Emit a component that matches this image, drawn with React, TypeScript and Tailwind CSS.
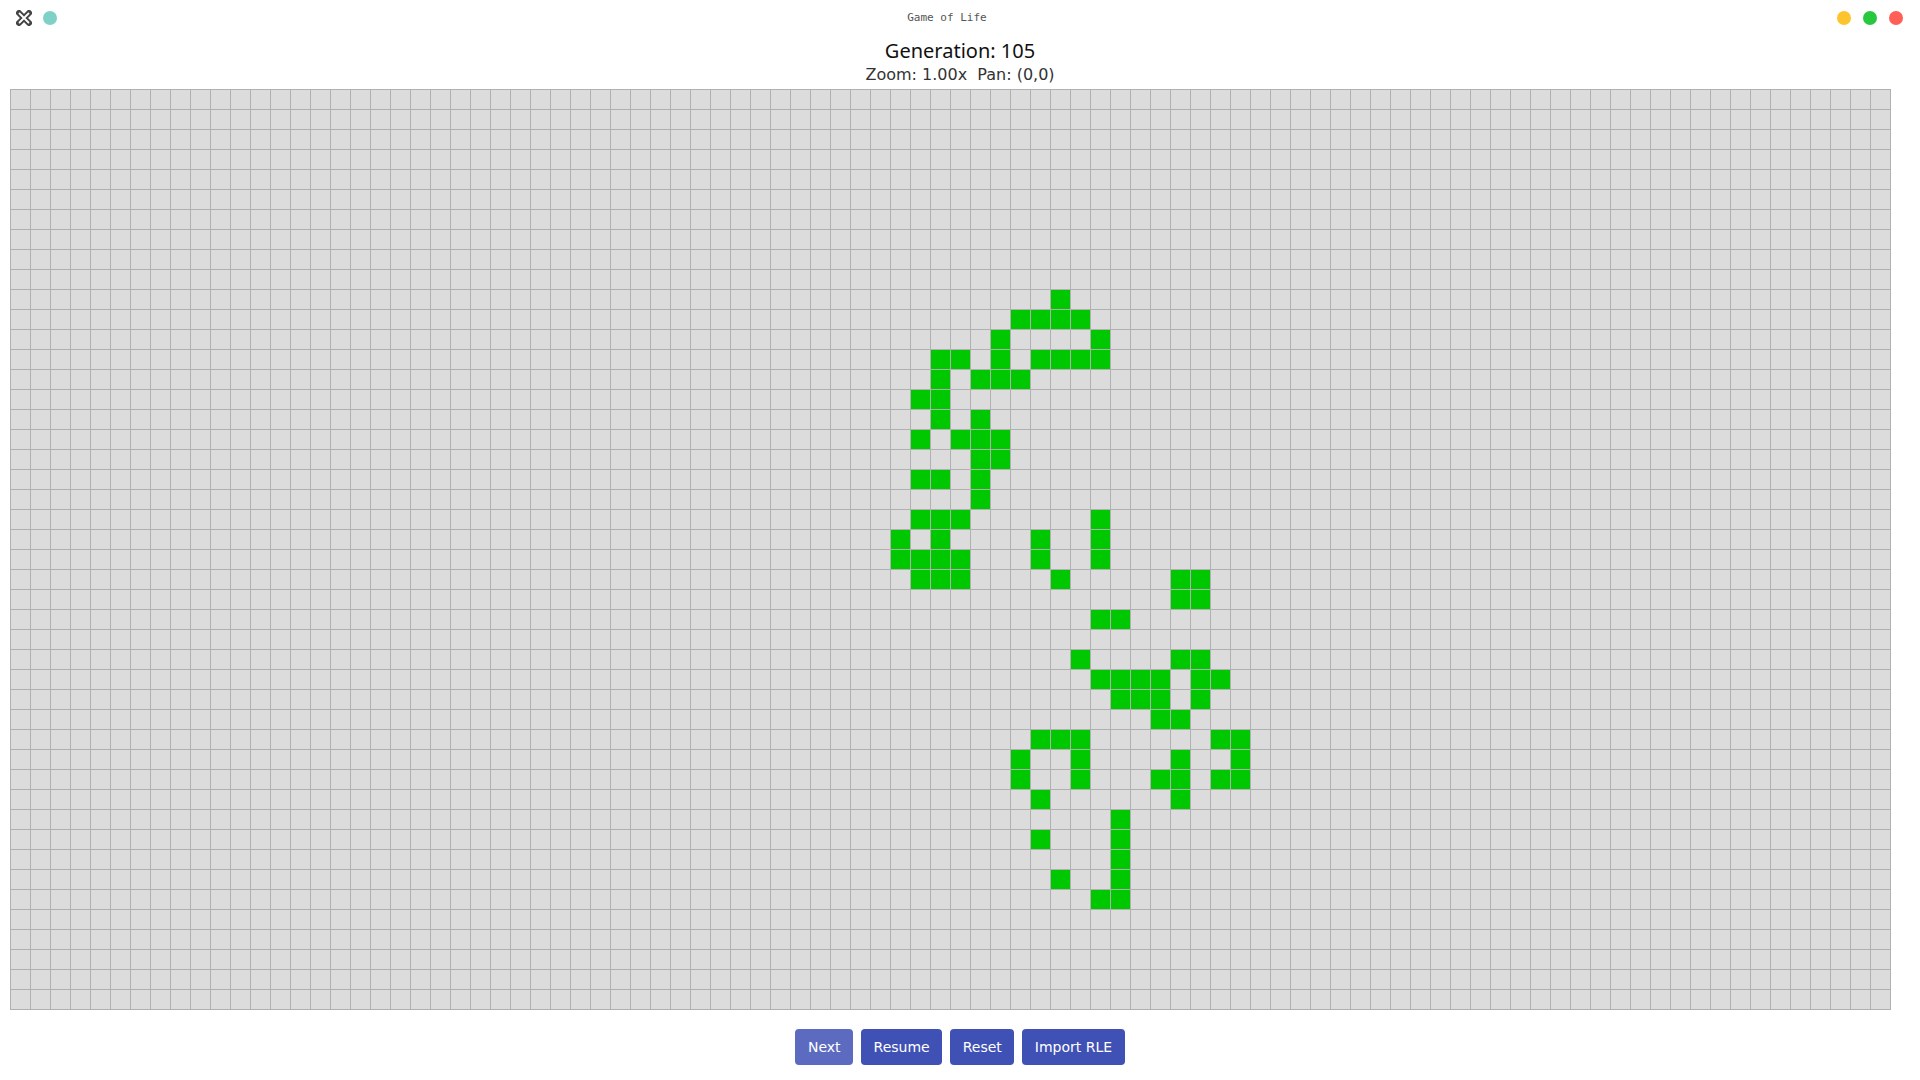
import React from "react";

const COLS = 94;
const ROWS = 46;

// live cells per row (generation 105)
const LIVE: Record<number, number[]> = {
  10: [52],
  11: [50, 51, 52, 53],
  12: [49, 54],
  13: [46, 47, 49, 51, 52, 53, 54],
  14: [46, 48, 49, 50],
  15: [45, 46],
  16: [46, 48],
  17: [45, 47, 48, 49],
  18: [48, 49],
  19: [45, 46, 48],
  20: [48],
  21: [45, 46, 47, 54],
  22: [44, 46, 51, 54],
  23: [44, 45, 46, 47, 51, 54],
  24: [45, 46, 47, 52, 58, 59],
  25: [58, 59],
  26: [54, 55],
  28: [53, 58, 59],
  29: [54, 55, 56, 57, 59, 60],
  30: [55, 56, 57, 59],
  31: [57, 58],
  32: [51, 52, 53, 60, 61],
  33: [50, 53, 58, 61],
  34: [50, 53, 57, 58, 60, 61],
  35: [51, 58],
  36: [55],
  37: [51, 55],
  38: [55],
  39: [52, 55],
  40: [54, 55],
};

function isAlive(r: number, c: number) {
  const row = LIVE[r];
  return row ? row.includes(c) : false;
}

function TitleBar() {
  return (
    <div className="flex h-9 items-center">
      <div className="flex items-center gap-[11px] pl-4">
        <svg width="16" height="16" viewBox="0 0 16 16">
          <path d="M3 3 L13 13 M13 3 L3 13" stroke="#454545" strokeWidth="6" strokeLinecap="round" />
          <path d="M3.5 3.5 L12.5 12.5 M12.5 3.5 L3.5 12.5" stroke="#ffffff" strokeWidth="1.8" strokeLinecap="round" />
        </svg>
        <div className="h-[14px] w-[14px] rounded-full bg-[#7fd1c8]" />
      </div>
      <div className="flex-1 text-center font-['DejaVu_Sans_Mono',monospace] text-[11px] text-[#555]">
        Game of Life
      </div>
      <div className="flex items-center gap-3 pr-[17px]">
        <div className="h-[14px] w-[14px] rounded-full bg-[#fec42e]" />
        <div className="h-[14px] w-[14px] rounded-full bg-[#27c83f]" />
        <div className="h-[14px] w-[14px] rounded-full bg-[#ff5f57]" />
      </div>
    </div>
  );
}

function Board() {
  const cells = [];
  for (let r = 0; r < ROWS; r++) {
    for (let c = 0; c < COLS; c++) {
      cells.push(
        <div
          key={r * COLS + c}
          className={isAlive(r, c) ? "bg-[#00c800]" : "bg-[#dcdcdc]"}
        />
      );
    }
  }
  return (
    <div className="ml-[10px] grid w-[1881px] grid-cols-[repeat(94,19px)] grid-rows-[repeat(46,19px)] gap-px bg-[#b0b0b0] p-px">
      {cells}
    </div>
  );
}

export default function App() {
  return (
    <div className="h-[1080px] w-[1920px] overflow-hidden bg-white font-['DejaVu_Sans',sans-serif]">
      <TitleBar />
      <div className="flex flex-col items-center pt-px">
        <div className="font-['Noto_Sans',sans-serif] text-[20px] leading-7 text-[#111]">
          Generation: 105
        </div>
        <div className="text-[16px] leading-5 text-[#333]">Zoom: 1.00x&nbsp; Pan: (0,0)</div>
      </div>
      <div className="mt-[4px]">
        <Board />
      </div>
      <div className="mt-[19px] flex justify-center gap-2">
        <button className="h-9 rounded bg-[#5c6bc0] px-[12.5px] text-[14px] text-white">Next</button>
        <button className="h-9 rounded bg-[#3f51b5] px-[12.5px] text-[14px] text-white">Resume</button>
        <button className="h-9 rounded bg-[#3f51b5] px-[12.5px] text-[14px] text-white">Reset</button>
        <button className="h-9 rounded bg-[#3f51b5] px-[12.5px] text-[14px] text-white">Import RLE</button>
      </div>
    </div>
  );
}
